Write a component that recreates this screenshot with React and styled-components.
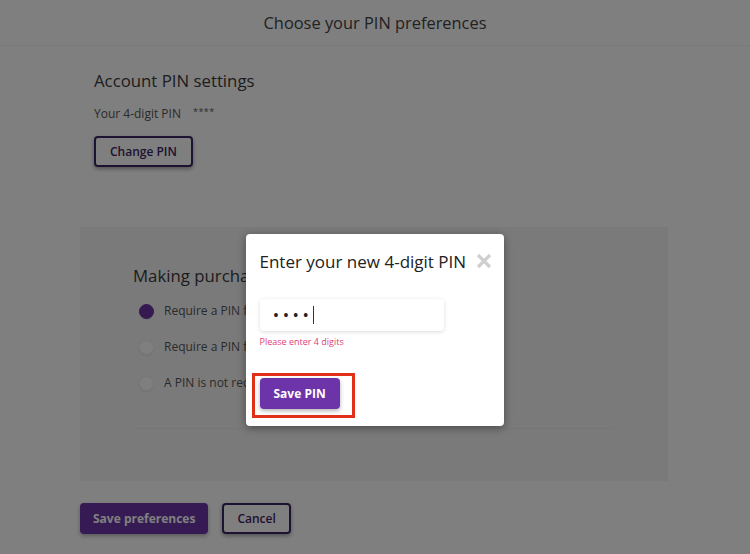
import React from "react";
import styled, { createGlobalStyle } from "styled-components";

const Global = createGlobalStyle`
  html, body { margin: 0; padding: 0; background: #ffffff; }
  body { font-family: "Open Sans", "Noto Sans", sans-serif; color: #444; }
  * { box-sizing: border-box; }
`;

const Page = styled.div`
  width: 750px;
  height: 554px;
  position: relative;
  overflow: hidden;
  background: #ffffff;
`;

const Header = styled.header`
  height: 46px;
  display: flex;
  align-items: center;
  justify-content: center;
  border-bottom: 1px solid #f2f2f2;
`;

const Title = styled.h1`
  margin: 0;
  font-size: 16.4px;
  font-weight: 400;
  color: #444;
`;

const Section = styled.section`
  padding: 24px 0 0 94px;
`;

const SectionTitle = styled.h2`
  margin: 0;
  font-size: 16.8px;
  font-weight: 400;
  color: #3a3a3a;
  line-height: 22px;
`;

const PinRow = styled.div`
  display: flex;
  align-items: flex-start;
  gap: 12px;
  margin-top: 13px;
  font-size: 12px;
  color: #555;
  line-height: 18px;
`;

const Stars = styled.span`
  font-size: 9px;
  line-height: 14px;
  letter-spacing: 0.5px;
`;

const OutlineButton = styled.button`
  height: 31px;
  padding: 0 ${(p) => p.$px || 14}px;
  border: 2px solid #3d2466;
  border-radius: 4px;
  background: #fff;
  color: #3d2466;
  font-family: inherit;
  font-size: 12px;
  font-weight: 600;
  box-shadow: 0 2px 4px rgba(0, 0, 0, 0.35);
`;

const ChangeWrap = styled.div`
  margin-top: 13px;
`;

const Card = styled.div`
  margin: 60px 82px 0 80px;
  height: 254px;
  background: #f5f5f5;
  padding: 38px 53px 0 53px;
  display: flex;
  flex-direction: column;
`;

const RadioList = styled.div`
  display: flex;
  flex-direction: column;
  gap: 18px;
  margin-top: 15px;
  padding-left: 6px;
`;

const RadioRow = styled.label`
  display: flex;
  align-items: center;
  gap: 10px;
  font-size: 12px;
  color: #555;
  line-height: 18px;
`;

const RadioDot = styled.span`
  width: 15px;
  height: 15px;
  border-radius: 50%;
  background: ${(p) => (p.$on ? "#6a35a4" : "#ffffff")};
  border: 1px solid ${(p) => (p.$on ? "#6a35a4" : "#f0f0f0")};
  box-shadow: 0 1px 2px rgba(0, 0, 0, 0.08);
  flex: none;
`;

const Divider = styled.hr`
  margin: 36px 0 0 2px;
  width: 480px;
  border: none;
  border-top: 1px solid #ececec;
`;

const Actions = styled.div`
  display: flex;
  gap: 14px;
  padding: 22px 0 0 80px;
`;

const PrimaryButton = styled.button`
  height: 31px;
  padding: 0 ${(p) => p.$px || 14}px;
  border: none;
  border-radius: 4px;
  background: #6c34a8;
  color: #fff;
  font-family: inherit;
  font-size: 12px;
  font-weight: 700;
  box-shadow: 0 2px 4px rgba(0, 0, 0, 0.3);
`;

const Overlay = styled.div`
  position: absolute;
  inset: 0;
  background: rgba(0, 0, 0, 0.5);
  display: flex;
  justify-content: center;
  padding-top: 234px;
`;

const Modal = styled.div`
  width: 258px;
  height: 192px;
  background: #fff;
  border-radius: 4px;
  box-shadow: 0 2px 8px rgba(0, 0, 0, 0.4);
  padding: 16px 12px 0 14px;
  display: flex;
  flex-direction: column;
  margin-left: -1px;
`;

const ModalHead = styled.div`
  display: flex;
  align-items: center;
  justify-content: space-between;
  height: 22px;
`;

const ModalTitle = styled.h3`
  margin: 0;
  font-size: 17px;
  font-weight: 400;
  color: #222;
  white-space: nowrap;
`;

const Close = styled.span`
  width: 16px;
  height: 16px;
  display: flex;
  margin-right: 0px;
`;

const Input = styled.div`
  margin-top: 27px;
  width: 184px;
  height: 32px;
  border-radius: 4px;
  background: #fff;
  box-shadow: 0 1px 4px rgba(0, 0, 0, 0.14);
  display: flex;
  align-items: center;
  padding-left: 14px;
`;

const Dots = styled.span`
  font-size: 13px;
  letter-spacing: 5px;
  color: #222;
  font-weight: 700;
`;

const Caret = styled.span`
  width: 1px;
  height: 18px;
  background: #333;
`;

const ErrorText = styled.div`
  margin-top: 5px;
  font-size: 9px;
  color: #e0407a;
  line-height: 12px;
`;

const Highlight = styled.div`
  margin-top: 25px;
  margin-left: -8px;
  align-self: flex-start;
  border: 3px solid #e0301a;
  padding: 2px 12px 6px 5px;
`;

export default function App() {
  return (
    <Page>
      <Global />
      <Header>
        <Title>Choose your PIN preferences</Title>
      </Header>
      <Section>
        <SectionTitle>Account PIN settings</SectionTitle>
        <PinRow>
          <span>Your 4-digit PIN</span>
          <Stars>****</Stars>
        </PinRow>
        <ChangeWrap>
          <OutlineButton $px={14}>Change PIN</OutlineButton>
        </ChangeWrap>
      </Section>
      <Card>
        <SectionTitle>Making purchases</SectionTitle>
        <RadioList>
          <RadioRow>
            <RadioDot $on />
            Require a PIN for all purchases
          </RadioRow>
          <RadioRow>
            <RadioDot />
            Require a PIN for purchases only
          </RadioRow>
          <RadioRow>
            <RadioDot />
            A PIN is not required to make purchases or add channels.
          </RadioRow>
        </RadioList>
        <Divider />
      </Card>
      <Actions>
        <PrimaryButton $px={13}>Save preferences</PrimaryButton>
        <OutlineButton $px={13}>Cancel</OutlineButton>
      </Actions>
      <Overlay>
        <Modal>
          <ModalHead>
            <ModalTitle>Enter your new 4-digit PIN</ModalTitle>
            <Close>
              <svg width="16" height="16" viewBox="0 0 16 16">
                <path d="M2 2 L14 14 M14 2 L2 14" stroke="#cfcfcf" strokeWidth="3.2" strokeLinecap="butt" />
              </svg>
            </Close>
          </ModalHead>
          <Input>
            <Dots>••••</Dots>
            <Caret />
          </Input>
          <ErrorText>Please enter 4 digits</ErrorText>
          <Highlight>
            <PrimaryButton $px={14}>Save PIN</PrimaryButton>
          </Highlight>
        </Modal>
      </Overlay>
    </Page>
  );
}
